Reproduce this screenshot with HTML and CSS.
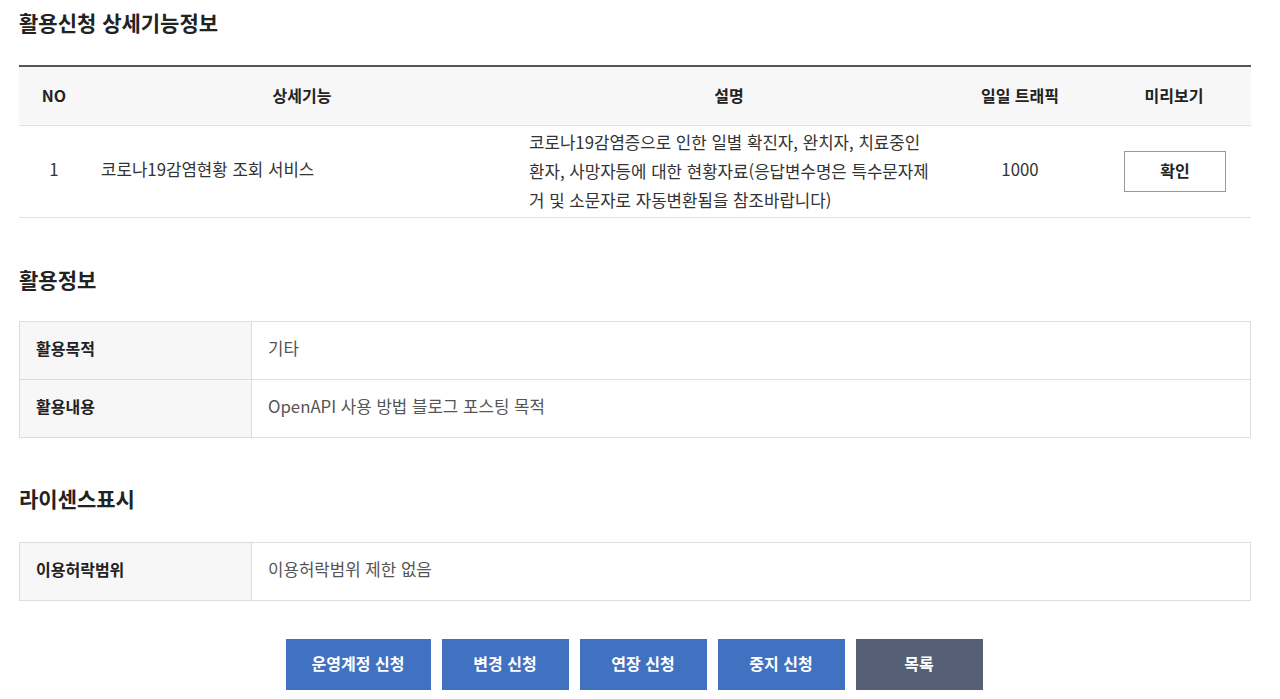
FILE: index.html
```html
<!DOCTYPE html>
<html lang="ko">
<head>
    <meta charset="UTF-8">
    <meta name="viewport" content="width=device-width, initial-scale=1.0">
    <title>활용신청 상세기능정보</title>
    <link rel="stylesheet" href="styles.css">
</head>
<body>
    <div class="container">
        <h2 class="section-title first">활용신청 상세기능정보</h2>
        <table class="list-table">
            <colgroup>
                <col class="col-no">
                <col class="col-name">
                <col class="col-desc">
                <col class="col-traffic">
                <col class="col-preview">
            </colgroup>
            <thead>
                <tr>
                    <th>NO</th>
                    <th>상세기능</th>
                    <th>설명</th>
                    <th>일일 트래픽</th>
                    <th>미리보기</th>
                </tr>
            </thead>
            <tbody>
                <tr>
                    <td class="center">1</td>
                    <td class="name">코로나19감염현황 조회 서비스</td>
                    <td class="desc">코로나19감염증으로 인한 일별 확진자, 완치자, 치료중인 환자, 사망자등에 대한 현황자료(응답변수명은 특수문자제거 및 소문자로 자동변환됨을 참조바랍니다)</td>
                    <td class="center">1000</td>
                    <td class="center"><button class="btn-preview">확인</button></td>
                </tr>
            </tbody>
        </table>

        <h2 class="section-title">활용정보</h2>
        <table class="info-table">
            <tr>
                <th>활용목적</th>
                <td>기타</td>
            </tr>
            <tr>
                <th>활용내용</th>
                <td>OpenAPI 사용 방법 블로그 포스팅 목적</td>
            </tr>
        </table>

        <h2 class="section-title license">라이센스표시</h2>
        <table class="info-table">
            <tr>
                <th>이용허락범위</th>
                <td>이용허락범위 제한 없음</td>
            </tr>
        </table>

        <div class="btn-area">
            <button class="btn blue wide">운영계정 신청</button>
            <button class="btn blue">변경 신청</button>
            <button class="btn blue">연장 신청</button>
            <button class="btn blue">중지 신청</button>
            <button class="btn gray">목록</button>
        </div>
    </div>
</body>
</html>
```

FILE: styles.css
```css
body {
    margin: 0;
    font-family: 'Noto Sans CJK KR', 'Noto Sans', sans-serif;
    color: #333333;
    background: #ffffff;
    overflow: hidden;
}
.container {
    width: 1232px;
    margin-left: 19px;
}
.section-title {
    font-size: 21px;
    font-weight: bold;
    color: #222222;
    line-height: 30px;
    margin: 46px 0 27px;
}
.section-title.first {
    margin: 7px 0 28px;
}
.section-title.license {
    margin: 45px 0 29px;
}
table {
    width: 100%;
    border-collapse: collapse;
    table-layout: fixed;
    font-size: 16px;
}
.col-no { width: 70px; }
.col-name { width: 426px; }
.col-desc { width: 428px; }
.col-traffic { width: 154px; }
.col-preview { width: 154px; }
.list-table {
    border-top: 2px solid #555555;
}
.list-table th {
    height: 55px;
    background: #f7f7f7;
    font-weight: bold;
    color: #222222;
    border-bottom: 1px solid #e2e2e2;
    padding: 0 0 3px;
}
.list-table td {
    height: 86px;
    border-bottom: 1px solid #e2e2e2;
    padding: 0 0 5px;
    font-size: 16.8px;
}
.list-table td.center {
    text-align: center;
}
.list-table td.name {
    padding-left: 12px;
}
.list-table td.desc {
    padding: 0 8px 0 14px;
    line-height: 29px;
}
.btn-preview {
    width: 102px;
    height: 41px;
    border: 1px solid #999999;
    background: #ffffff;
    font-family: inherit;
    font-size: 16px;
    font-weight: bold;
    color: #222222;
    margin: 4px 0 0 2px;
    padding-bottom: 3px;
}
.info-table {
    border: 1px solid #dddddd;
}
.info-table th {
    width: 215px;
    height: 52px;
    background: #f7f7f7;
    text-align: left;
    font-weight: bold;
    color: #222222;
    padding: 0 0 5px 16px;
    border: 1px solid #dddddd;
}
.info-table td {
    padding: 0 0 5px 16px;
    color: #555555;
    font-size: 16.8px;
    border: 1px solid #dddddd;
}
.btn-area {
    display: flex;
    justify-content: center;
    gap: 11px;
    margin-top: 38px;
    padding-right: 2px;
}
.btn {
    width: 127px;
    height: 51px;
    border: none;
    color: #ffffff;
    font-family: inherit;
    font-size: 16px;
    font-weight: bold;
    padding-bottom: 4px;
}
.btn.wide {
    width: 145px;
}
.btn.blue {
    background: #4171c1;
}
.btn.gray {
    background: #555f75;
}
```
